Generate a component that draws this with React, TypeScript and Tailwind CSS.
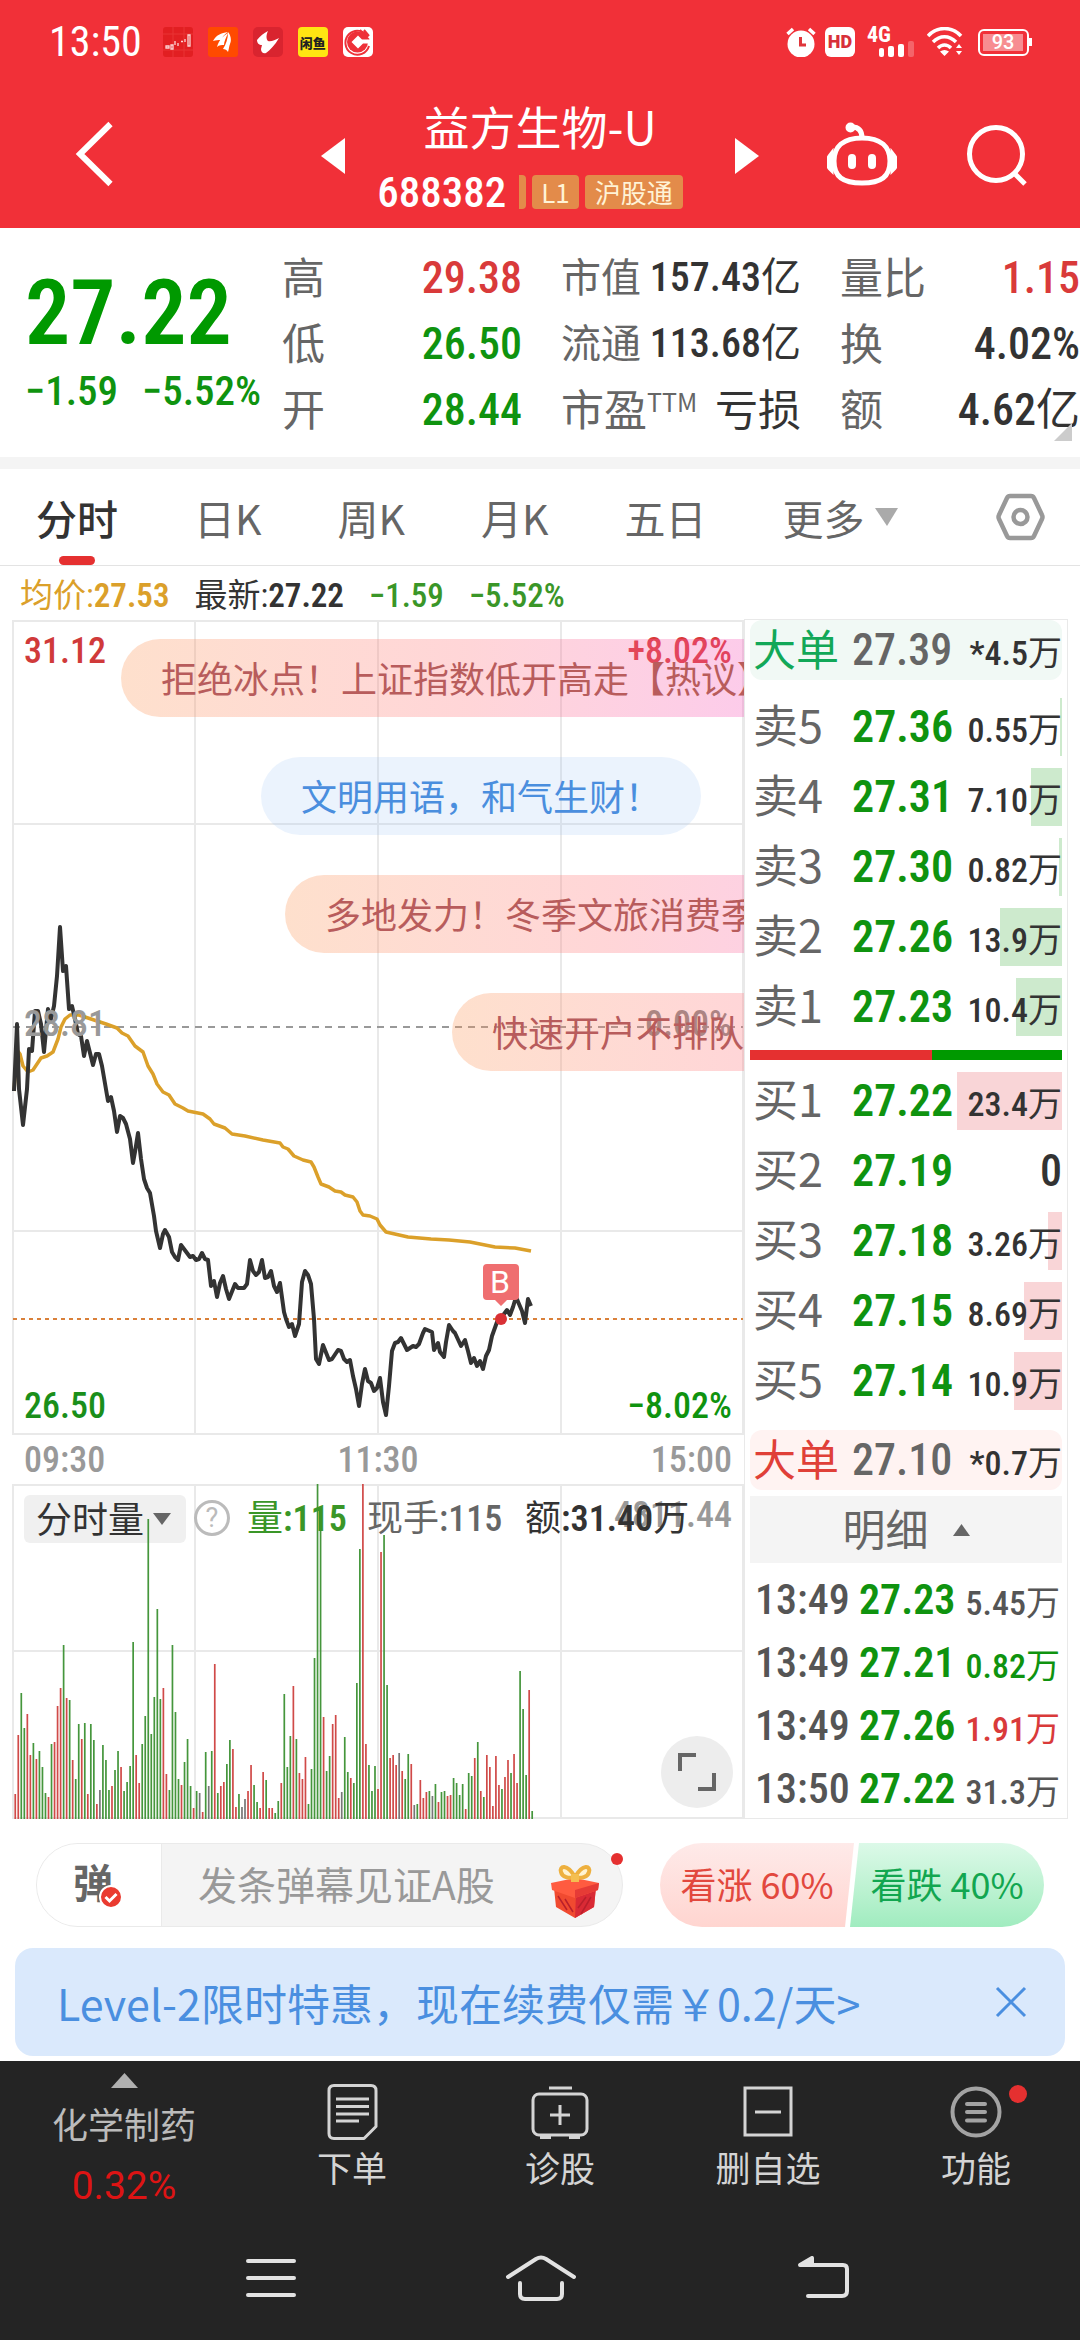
import type { ReactNode } from 'react';
import clsx from 'clsx';

const NUM = "font-['Roboto_Condensed','Liberation_Sans_Narrow','Noto_Sans_CJK_SC',sans-serif]";

const stats = [
  [
    { label: '高', value: '29.38', tone: 'text-[#d93a3a]' },
    { label: '低', value: '26.50', tone: 'text-[#0f930f]' },
    { label: '开', value: '28.44', tone: 'text-[#0f930f]' },
  ],
  [
    { label: '市值', value: '157.43', unit: '亿', tone: 'text-[#333]' },
    { label: '流通', value: '113.68', unit: '亿', tone: 'text-[#333]' },
    { label: '市盈', sup: 'TTM', value: '亏损', tone: 'text-[#333]' },
  ],
  [
    { label: '量比', value: '1.15', tone: 'text-[#d93a3a]' },
    { label: '换', value: '4.02%', tone: 'text-[#333]' },
    { label: '额', value: '4.62', unit: '亿', tone: 'text-[#333]' },
  ],
];

const tabs = ['分时', '日K', '周K', '月K', '五日'];

const asks = [
  { label: '卖5', price: '27.36', volume: '0.55', bar: 2 },
  { label: '卖4', price: '27.31', volume: '7.10', bar: 31 },
  { label: '卖3', price: '27.30', volume: '0.82', bar: 3 },
  { label: '卖2', price: '27.26', volume: '13.9', bar: 62 },
  { label: '卖1', price: '27.23', volume: '10.4', bar: 46 },
];

const bids = [
  { label: '买1', price: '27.22', volume: '23.4', bar: 105 },
  { label: '买2', price: '27.19', volume: '0', bar: 0 },
  { label: '买3', price: '27.18', volume: '3.26', bar: 14 },
  { label: '买4', price: '27.15', volume: '8.69', bar: 38 },
  { label: '买5', price: '27.14', volume: '10.9', bar: 48 },
];

const ticks = [
  { time: '13:49', price: '27.23', volume: '5.45', tone: 'text-[#555]' },
  { time: '13:49', price: '27.21', volume: '0.82', tone: 'text-[#0f930f]' },
  { time: '13:49', price: '27.26', volume: '1.91', tone: 'text-[#d93a3a]' },
  { time: '13:50', price: '27.22', volume: '31.3', tone: 'text-[#555]' },
];

const priceLine =
  '2,471 5,404 7,469 9,487 11,505 15,469 17,429 20,431 23,391 26,391 29,404 32,432 36,389 39,399 42,386 45,356 48,307 51,351 54,346 57,389 60,386 63,399 66,414 69,416 72,436 75,421 81,445 84,434 87,434 90,446 96,481 99,477 102,491 105,512 108,496 111,498 114,504 118,519 121,543 123,532 126,513 129,539 132,559 135,568 138,573 142,596 144,611 148,628 151,614 153,610 157,617 160,632 163,637 166,640 169,625 172,629 178,637 181,636 184,640 187,639 190,633 193,639 196,640 199,666 202,661 205,677 208,663 211,656 214,669 217,679 223,664 226,668 232,668 235,664 238,640 241,651 244,655 247,652 250,640 253,658 256,657 259,651 262,666 265,672 268,663 272,692 274,699 277,707 280,704 283,716 287,704 290,662 293,651 296,655 299,664 302,699 304,739 307,744 311,725 317,740 320,739 326,730 329,731 332,739 335,742 338,740 341,756 344,769 347,786 350,764 353,749 356,761 359,763 362,771 365,768 368,758 371,782 374,795 377,766 380,731 383,723 386,722 389,718 395,730 401,726 404,727 407,724 411,713 413,709 420,712 422,730 426,723 428,732 432,737 434,722 437,705 441,711 443,713 449,726 453,720 456,731 459,743 462,738 465,746 468,741 471,749 474,736 477,730 480,716 485,702 489,698 495,690 498,695 501,687 504,677 510,691 513,703 516,679 519,686';

const averageLine =
  '2,471 5,430 8,434 11,446 16,452 21,450 29,438 35,436 41,432 46,419 49,407 53,399 58,395 67,395 76,398 94,404 105,408 110,413 116,416 123,426 131,432 136,446 141,454 145,464 151,472 157,475 163,484 171,488 176,491 191,494 198,499 202,504 213,508 220,514 233,516 251,520 268,523 271,527 276,529 282,536 291,540 299,542 302,547 306,557 309,564 317,567 323,571 329,572 333,575 341,577 345,582 348,591 351,595 358,596 365,599 368,605 374,612 396,617 419,619 437,620 458,622 483,627 503,628 519,631';

// one entry per minute: r = up, g = down, n = unchanged
const volumes =
  'r25 r84 g126 g91 r105 r64 g76 r60 g68 g52 g26 r22 g75 r77 r113 r131 g174 r121 g119 r59 g40 g95 r80 g96 r25 g95 g79 r15 n29 g74 g59 g29 r33 g49 g68 r52 g28 g37 g53 g177 r64 r36 g75 g103 g300 g85 g122 g210 g120 r131 r45 g29 g174 g107 g40 r34 g57 g80 g33 r11 g28 n26 r7 g67 n33 g68 r155 g26 r33 r37 g55 g79 r70 r12 g25 n12 n20 r28 r54 g34 g17 r11 r47 g39 r11 r11 g6 g18 r36 g125 g52 g83 r133 g80 r46 r40 r62 g15 g50 g161 g335 g306 r102 g48 g63 r95 r104 r21 n27 g82 g47 r41 g36 g136 g270 r335 r75 g54 g28 g53 r30 r267 g284 g134 r61 r64 r54 n66 r48 g40 g65 r55 n14 g15 r39 r21 r27 g28 n23 g35 r17 g27 g28 r23 r24 g41 g36 g24 g35 r10 g46 g43 r61 g77 r28 g22 r64 r52 r13 r63 r34 g30 r42 r59 g46 r65 r36 g148 g110 g44 r129 g8'.split(' ');

const barColors: Record<string, string> = { r: '#d04a48', g: '#45963c', n: '#777777' };

function AppIcons() {
  return (
    <div className="flex items-center gap-[15px]">
      <svg className="size-[30px]" viewBox="0 0 30 30">
        <rect width="30" height="30" rx="3" fill="#e21f22" />
        <path d="M10 0v30M21 0v30M0 7h30M0 23h30" stroke="#e93434" strokeWidth="1" />
        <path d="M3 19h3v2H3zM8 18v4h2v-4zM12 14v4M15 16v3M18 14.500h2M22 12v3M25 8v11h2V8z" stroke="#fbd5d5" strokeWidth="1.300" fill="none" />
      </svg>
      <svg className="size-[30px]" viewBox="0 0 30 30">
        <rect width="30" height="30" rx="3" fill="#ff4a00" />
        <path d="M5 14C8 8 13 6 20 5c-4 3-6 5-7 8-3 0-5 0-8 1zM9 20c2-7 6-11 11-14-2 5-4 8-4 12-2 0-5 0-7 2zM15 22c3-5 5-10 5-17 4 5 3 10 2 12s-1 5-2 8c-1-2-3-3-5-3z" fill="#fff" />
      </svg>
      <svg className="size-[30px]" viewBox="0 0 30 30">
        <rect width="30" height="30" rx="5" fill="#d9242f" />
        <path d="M15 4c-2 4-2 8 0 10 3 1 7-1 11-3-4 7-9 12-13 15-3 1-5-1-5-4l1-4c-3 0-5-2-5-5 3-4 7-7 11-9z" fill="#fff" />
      </svg>
      <div className="flex size-[30px] items-center justify-center rounded bg-[#ffe512] text-[13px] leading-none font-black text-[#222]">闲鱼</div>
      <svg className="size-[30px]" viewBox="0 0 30 30">
        <rect width="30" height="30" rx="5" fill="#fff" />
        <path d="M25 10A12 12 0 1 0 26 19M17 3l9 10M21 3l5 6" fill="none" stroke="#ee3038" strokeWidth="2" />
        <circle cx="14.500" cy="15" r="10.500" fill="#ee3038" />
        <path d="M15 8.500l6.500 6.500-6.500 6.500L8.500 15zM19 12.500h8v4h-8z" fill="#fff" />
      </svg>
    </div>
  );
}

function StatusBar() {
  return (
    <div className="flex h-[84px] items-center justify-between pr-12 pl-[49px] text-white">
      <div className="flex items-center gap-[21px]">
        <time className="font-['Roboto_Condensed','Liberation_Sans_Narrow',sans-serif] text-[42px] leading-none">13:50</time>
        <AppIcons />
      </div>
      <div className="flex items-center">
        <svg className="h-[30px] w-[30px]" viewBox="0 0 30 30">
          <circle cx="15" cy="17" r="13.500" fill="#fff" />
          <path d="M1.500 7 7 2M28.500 7 23 2" stroke="#fff" strokeWidth="3.500" />
          <path d="M14.500 10v8H20" fill="none" stroke="#e0353b" strokeWidth="3" />
        </svg>
        <div className="ml-[9px] flex size-[30px] items-center justify-center rounded-md bg-white font-[Roboto,sans-serif] text-[18px] leading-none font-black text-[#d8303a]">HD</div>
        <div className="ml-3 h-[30px] w-[47px]">
          <div className="font-['Roboto_Condensed','Liberation_Sans_Narrow',sans-serif] text-[22px] leading-4 font-bold">4G</div>
          <svg className="-mt-[2px] ml-3 h-4 w-[35px]" viewBox="0 0 35 16">
            <rect x="0" y="7" width="5" height="9" rx="2" fill="#fff" />
            <rect x="9" y="5" width="6" height="11" rx="2" fill="#fff" />
            <rect x="19" y="3" width="6" height="13" rx="2" fill="#fff" />
            <rect x="29" y="0" width="6" height="16" rx="2" fill="#fff" opacity="0.25" />
          </svg>
        </div>
        <svg className="ml-[13px] h-[30px] w-9" viewBox="0 0 36 30">
          <path d="M1 9C10-1 25-1 34 9M6 15c7-7 16-7 23 0M11 21c4-4 9-4 13 0" fill="none" stroke="#fff" strokeWidth="3.500" />
          <path d="M13 24.500c3-2 6-2 9 0L17.500 29zM29 21l3-4 3 4zM29 24l3 4 3-4z" fill="#fff" />
        </svg>
        <div className="ml-[15px] flex items-center">
          <div className="flex h-[27px] w-[51px] items-center rounded-md border-2 border-white p-[3px]">
            <div className="h-full w-10 bg-white/45 text-center font-[Roboto,sans-serif] text-[20px] leading-[17px] font-medium">93</div>
          </div>
          <div className="h-2 w-[3px] bg-white" />
        </div>
      </div>
    </div>
  );
}

function Header() {
  return (
    <header className="bg-[#f13038] text-white">
      <StatusBar />
      <div className="grid h-36 grid-cols-[1fr_auto_1fr] items-start">
        <button aria-label="返回" className="mt-[37px] ml-[75px] justify-self-start">
          <svg className="h-[66px] w-10" viewBox="0 0 40 66">
            <path d="M35.500 3 5 33l30.500 30" fill="none" stroke="#fff" strokeWidth="6" />
          </svg>
        </button>
        <div className="flex w-[438px] justify-between">
          <button aria-label="上一只" className="mt-[54px] self-start">
            <svg className="h-9 w-6" viewBox="0 0 24 36"><path d="M24 0v36L0 18z" fill="#fff" /></svg>
          </button>
          <div className="flex flex-col items-center">
            <h1 className="mt-2 mb-1 text-[46px] leading-[66px]">益方生物-U</h1>
            <div className="flex items-center gap-[6px] pr-5">
              <span className={clsx(NUM, 'mr-[7px] text-[43px] leading-[60px] font-medium')}>688382</span>
              <span className="h-[34px] w-[7px] rounded-r bg-[#e38b4a]" />
              <span className="rounded bg-[#e38b4a] px-[9px] text-[26px] leading-[34px] text-[#fff3d6]">L1</span>
              <span className="rounded bg-[#e38b4a] px-[10px] text-[26px] leading-[34px] text-[#fff3d6]">沪股通</span>
            </div>
          </div>
          <button aria-label="下一只" className="mt-[54px] self-start">
            <svg className="h-9 w-6" viewBox="0 0 24 36"><path d="M0 0v36l24-18z" fill="#fff" /></svg>
          </button>
        </div>
        <div className="mt-[38px] mr-[52px] flex items-center gap-[69px] justify-self-end">
          <button aria-label="智能助手">
            <svg className="h-[66px] w-[70px]" viewBox="0 0 70 66" fill="none" stroke="#fff" strokeWidth="5">
              <path d="M35 16c19 0 28 9 28 23 0 16-9 22-28 22S7 55 7 39c0-14 9-23 28-23z" />
              <path d="M35 16C35 8 31 5 25 5" />
              <circle cx="23.500" cy="5.500" r="2.500" />
              <path d="M4 33c-4 5-4 10 0 14zM66 33c4 5 4 10 0 14z" fill="#fff" />
              <path d="M25 36v7M45 36v7" strokeWidth="8" strokeLinecap="round" />
            </svg>
          </button>
          <button aria-label="搜索">
            <svg className="h-[66px] w-[62px]" viewBox="0 0 62 66" fill="none" stroke="#fff" strokeWidth="5">
              <circle cx="30" cy="32" r="26.500" />
              <path d="M48 51l11 11" />
            </svg>
          </button>
        </div>
      </div>
    </header>
  );
}

function Quote() {
  return (
    <section className="relative flex border-b-12 border-[#f4f4f4] pt-[17px] pb-[14px]">
      <div className="w-[282px] pl-[25px]">
        <div className={clsx(NUM, 'mt-[22px] text-[90px] leading-[94px] font-semibold text-[#009900]')}>27.22</div>
        <div className={clsx(NUM, 'mt-[6px] flex gap-6 text-[41px] leading-12 font-medium whitespace-nowrap text-[#0f930f]')}>
          <span>−1.59</span>
          <span>−5.52%</span>
        </div>
      </div>
      <div className="grid flex-1 grid-cols-3 gap-[39px]">
        {stats.map((column, i) => (
          <dl key={i}>
            {column.map((item) => (
              <div key={item.label} className="flex h-[66px] items-center justify-between whitespace-nowrap">
                <dt className={clsx('pb-[6px] leading-none text-[#666]', i === 1 && !item.sup ? 'text-[40px]' : 'text-[43px]')}>
                  {item.label}
                  {item.sup && <sup className="-top-[14px] text-[25px] leading-none">{item.sup}</sup>}
                </dt>
                <dd className={clsx(item.sup ? 'pb-[6px] text-[43px]' : clsx(NUM, 'font-medium', i === 1 ? 'text-[40px]' : 'text-[44px]'), 'leading-none', item.tone)}>
                  {item.value}
                  {item.unit && <span className="font-normal">{item.unit}</span>}
                </dd>
              </div>
            ))}
          </dl>
        ))}
      </div>
      <svg className="absolute right-2 bottom-4 size-[18px]" viewBox="0 0 18 18"><path d="M18 0v18H0z" fill="#ccc" /></svg>
    </section>
  );
}

function ChartTabs() {
  return (
    <nav className="flex h-[97px] items-center gap-[76px] border-b border-[#e3e3e3] pr-[35px] pl-9 text-[41px] text-[#666]">
      {tabs.map((tab, i) => (
        <button key={tab} className={clsx('relative h-full leading-none', i === 0 && 'font-medium text-[#333]')}>
          {tab}
          {i === 0 && <span className="absolute bottom-0 left-1/2 h-[9px] w-9 -translate-x-1/2 rounded-full bg-[#e53030]" />}
        </button>
      ))}
      <button className="flex h-full items-center gap-[10px] leading-none">
        更多
        <svg className="h-[18px] w-[23px]" viewBox="0 0 23 18"><path d="M0 0h23L12 18z" fill="#aaa" /></svg>
      </button>
      <button aria-label="设置" className="ml-auto">
        <svg className="h-12 w-[49px]" viewBox="0 0 49 48" fill="none" stroke="#999" strokeWidth="4.500" strokeLinejoin="round">
          <path d="M14 3h21q2 0 3 2l8 17q1 2 0 4l-8 17q-1 2-3 2H14q-2 0-3-2L3 26q-1-2 0-4l8-17q1-2 3-2z" />
          <circle cx="24.500" cy="24" r="7" />
        </svg>
      </button>
    </nav>
  );
}

function Bubble({ className, children }: { className: string; children: ReactNode }) {
  return <div className={clsx('absolute h-[78px] rounded-full px-10 text-[36px] leading-[76px] whitespace-nowrap', className)}>{children}</div>;
}

function PriceChart() {
  return (
    <div className={clsx(NUM, 'relative h-[815px] overflow-hidden text-[36px] leading-none font-medium')}>
      <svg className="size-full" viewBox="0 0 732 815" preserveAspectRatio="none" fill="none">
        <path d="M1 1h730v813H1zM183 1v813M366 1v813M549 1v813M1 204h730M1 611h730" stroke="#e9e9e9" strokeWidth="2" />
        <path d="M1 407h730" stroke="#999" strokeWidth="2" strokeDasharray="7 6" />
        <path d="M1 699h730" stroke="#d9803a" strokeWidth="2" strokeDasharray="4 4" />
        <polyline points={averageLine} stroke="#dba02a" strokeWidth="3.500" strokeLinejoin="round" />
        <polyline points={priceLine} stroke="#333" strokeWidth="4" strokeLinejoin="round" />
        <path d="M475 644h28q4 0 4 4v28q0 4-4 4h-8l-6 6-6-6h-8q-4 0-4-4v-28q0-4 4-4z" fill="#ef6e70" />
        <circle cx="489" cy="699" r="6" fill="#d93035" />
      </svg>
      <span className="absolute top-[13px] left-3 text-[#d03a3a]">31.12</span>
      <span className="absolute top-[13px] right-3 text-[#d93a3a]">+8.02%</span>
      <span className="absolute top-[386px] left-3 text-[#999]">28.81</span>
      <span className="absolute top-[386px] right-3 text-[#888]">0.00%</span>
      <span className="absolute bottom-[11px] left-3 text-[#1a8f1a]">26.50</span>
      <span className="absolute right-3 bottom-[11px] text-[#0f930f]">−8.02%</span>
      <span className="absolute top-[646px] left-[478px] font-[Roboto,sans-serif] text-[32px] font-normal text-white">B</span>
      <div className="font-['Noto_Sans_CJK_SC',sans-serif] font-normal text-[#b85c5c]">
        <Bubble className="top-[19px] left-[109px] bg-linear-to-r from-[#fc98584d] via-[#ff767d4d] to-[#f548c64d]">拒绝冰点！上证指数低开高走【热议】</Bubble>
        <Bubble className="top-[137px] left-[249px] bg-[#9bc3f533] text-[#4a8ede]">文明用语，和气生财！</Bubble>
        <Bubble className="top-[255px] left-[273px] bg-linear-to-r from-[#fc98584d] via-[#ff767d4d] to-[#f548c64d]">多地发力！冬季文旅消费季火热开启</Bubble>
        <Bubble className="top-[373px] left-[440px] bg-linear-to-r from-[#fc98584d] via-[#ff767d4d] to-[#f548c64d]">快速开户不排队，手机轻松办理</Bubble>
      </div>
    </div>
  );
}

function VolumeChart() {
  return (
    <div className={clsx(NUM, 'relative h-[335px] text-[36px] leading-none')}>
      <svg className="size-full" viewBox="0 0 732 335" preserveAspectRatio="none">
        <path d="M1 1h730v333H1zM183 1v333M366 1v333M549 1v333M1 167h730" fill="none" stroke="#e9e9e9" strokeWidth="2" />
      </svg>
      <select aria-label="指标" className="absolute top-[11px] left-3 h-12 w-[162px] appearance-none rounded-md bg-[#f0f0f0] pb-[3px] pl-3 font-['Noto_Sans_CJK_SC',sans-serif] text-[36px] leading-[45px] text-[#333]">
        <option>分时量</option>
      </select>
      <svg className="absolute top-[29px] left-[141px] h-3 w-[18px]" viewBox="0 0 18 12"><path d="M0 0h18l-9 12z" fill="#666" /></svg>
      <svg className="absolute inset-0 size-full" viewBox="0 0 732 335" preserveAspectRatio="none">
        {volumes.map((v, i) => {
          const height = Number(v.slice(1));
          return <rect key={i} x={2.4 + i * 3.023} y={335 - height} width="1.700" height={height} fill={barColors[v[0]]} />;
        })}
      </svg>
      <button aria-label="指标说明" className="absolute top-4 left-[182px] flex size-9 items-center justify-center rounded-full border-3 border-[#bbb] font-[Roboto,sans-serif] text-[27px] leading-none text-[#bbb]">?</button>
      <span className="absolute top-[13px] right-3 font-medium text-[#999]">4811.44</span>
      <div className="absolute top-[17px] left-[235px] flex whitespace-nowrap">
        <span className="w-[120px] text-[#3a9628]">量<b className="font-semibold">:115</b></span>
        <span className="w-[158px] text-[#666]">现手<b className="font-medium">:115</b></span>
        <span className="text-[#333]">额<b className="font-semibold">:31.40</b>万</span>
      </div>
      <button aria-label="全屏" className="absolute right-[11px] bottom-[11px] flex size-18 items-center justify-center rounded-full bg-[#ededed]">
        <svg className="size-[38px]" viewBox="0 0 38 38"><path d="M2 18V2h16M36 20v16H20" fill="none" stroke="#666" strokeWidth="4" /></svg>
      </button>
    </div>
  );
}

function BigOrder({ price, volume, className, labelClass }: { price: string; volume: string; className: string; labelClass: string }) {
  return (
    <div className={clsx('flex h-[60px] items-center rounded-xl pl-[3px] leading-none', className)}>
      <span className={clsx('w-[99px] pb-[6px] text-[43px] whitespace-nowrap', labelClass)}>大单</span>
      <span className={clsx(NUM, 'text-[44px] font-medium text-[#666]')}>{price}</span>
      <span className={clsx(NUM, 'ml-auto pt-[6px] text-[34px] font-medium text-[#333]')}>
        *{volume}
        <span className="font-normal">万</span>
      </span>
    </div>
  );
}

function Levels({ rows, barClass }: { rows: typeof asks; barClass: string }) {
  return (
    <table className="w-full table-fixed leading-none">
      <tbody>
        {rows.map((row) => (
          <tr key={row.label} className="h-[70px]">
            <th scope="row" className="w-[102px] p-0 pb-2 pl-[3px] text-left text-[45px] font-normal whitespace-nowrap text-[#666]">{row.label}</th>
            <td className={clsx(NUM, 'w-[102px] p-0 text-[44px] font-semibold text-[#0f930f]')}>{row.price}</td>
            <td className={clsx(NUM, 'relative p-0 text-right font-medium whitespace-nowrap text-[#333]', row.volume === '0' ? 'text-[44px]' : 'pt-[6px] text-[34px]')}>
              <span className={clsx('absolute top-[6px] right-0 h-[58px]', barClass)} style={{ width: row.bar }} />
              <span className="relative">
                {row.volume}
                {row.volume !== '0' && <span className="font-normal">万</span>}
              </span>
            </td>
          </tr>
        ))}
      </tbody>
    </table>
  );
}

function OrderBook() {
  return (
    <aside className="-mt-px w-[324px] border border-[#e9e9e9] px-[5px]">
      <BigOrder price="27.39" volume="4.5" className="mb-3 bg-[#f1f9f5]" labelClass="text-[#12a858]" />
      <Levels rows={asks} barClass="bg-[#cdeacd]" />
      <div className="mt-2 mb-[6px] flex h-[10px]">
        <div className="w-7/12 bg-[#e53030]" />
        <div className="flex-1 bg-[#009900]" />
      </div>
      <Levels rows={bids} barClass="bg-[#f9d5d7]" />
      <BigOrder price="27.10" volume="0.7" className="mt-[14px] bg-[#fff3f2]" labelClass="text-[#e04038]" />
      <button className="mt-[6px] flex h-[67px] w-full items-center justify-center gap-6 bg-[#f4f4f4] text-[43px] leading-none text-[#666]">
        <span className="pb-1">明细</span>
        <svg className="h-3 w-[17px]" viewBox="0 0 17 12"><path d="M0 12h17L8.500 0z" fill="#666" /></svg>
      </button>
      <table className={clsx(NUM, 'mt-[3px] w-full table-fixed leading-none font-medium whitespace-nowrap')}>
        <tbody>
          {ticks.map((tick, i) => (
            <tr key={i} className="h-[63px]">
              <td className="w-[109px] p-0 pt-[5px] pl-[5px] text-[42px] text-[#555]">{tick.time}</td>
              <td className="w-[95px] p-0 pt-[5px] text-[42px] font-semibold text-[#0f930f]">{tick.price}</td>
              <td className={clsx('p-0 pt-[10px] pr-[2px] text-right text-[34px]', tick.tone)}>
                {tick.volume}
                <span className="font-normal">万</span>
              </td>
            </tr>
          ))}
        </tbody>
      </table>
    </aside>
  );
}

function Gift() {
  return (
    <svg className="h-[54px] w-[50px]" viewBox="0 0 50 54">
      <path d="M4 24l22 8 20-8-2 19-19 11L6 43z" fill="#f04a30" />
      <path d="M26 30l20-8-2 21-19 11z" fill="#d92a35" />
      <path d="M1 19l24-5 24 5-1 7-23 8-23-8z" fill="#ff5b40" />
      <path d="M25 26l24-7-1 7-23 8z" fill="#e63b36" />
      <path d="M8 32l9 14M15 35l8 13M31 50l10-17M28 44l8-11" stroke="#b91f2b" strokeWidth="1.500" />
      <path d="M25 13C17-1 9 2 11 8c1 5 8 7 14 5 6 2 13 0 14-5 2-6-6-9-14 5z" fill="#fff3d0" stroke="#eeb03e" strokeWidth="4" />
      <path d="M21 10h8v8h-8z" fill="#f4be50" />
    </svg>
  );
}

function DanmakuBar() {
  return (
    <div className="mt-6 flex h-[84px] gap-[37px] pr-9 pl-9">
      <div className="relative flex min-w-0 flex-1 rounded-full border border-[#eaeaea] bg-[#f4f4f4]">
        <button aria-label="弹幕开关" className="relative w-[125px] shrink-0 rounded-l-full border-r border-[#eaeaea] bg-white text-[40px] leading-none font-bold text-[#666]">
          <span className="-mt-2 block pr-3">弹</span>
          <svg className="absolute top-[41px] left-[62px] size-6" viewBox="0 0 24 24">
            <circle cx="12" cy="12" r="11" fill="#ea3b30" stroke="#fff" strokeWidth="2" />
            <path d="M6.500 12l4 4 7-7" fill="none" stroke="#fff" strokeWidth="3" />
          </svg>
        </button>
        <input aria-label="弹幕" placeholder="发条弹幕见证A股" className="min-w-0 flex-1 bg-transparent pb-1 pl-9 text-[39px] text-[#333] outline-none placeholder:text-[#999]" />
        <button aria-label="礼物" className="mt-3 mr-[22px] shrink-0"><Gift /></button>
        <span className="absolute top-[9px] -right-px size-3 rounded-full bg-[#e53030]" />
      </div>
      <div className="flex w-[384px] shrink-0 text-[36px] leading-none whitespace-nowrap">
        <button className="flex-1 rounded-l-full bg-linear-to-b from-[#feeae9] to-[#ffd5d0] pb-1 text-[#e2483e] [clip-path:polygon(0_0,100%_0,calc(100%-9px)_100%,0_100%)]">看涨 60%</button>
        <button className="-ml-1 flex-1 rounded-r-full bg-linear-to-b from-[#dcf9e8] to-[#a0ecbf] pb-1 text-[#12a650] [clip-path:polygon(9px_0,100%_0,100%_100%,0_100%)]">看跌 40%</button>
      </div>
    </div>
  );
}

function Promo() {
  return (
    <div className="mx-[15px] mt-[21px] mb-[5px] flex h-27 items-center justify-between rounded-[18px] bg-[#dae9fc] pr-[38px] pl-[42px] text-[#4a8fe0]">
      <a href="#level2" className="text-[43px] leading-none">Level-2限时特惠，现在续费仅需￥0.2/天&gt;</a>
      <button aria-label="关闭">
        <svg className="size-8" viewBox="0 0 32 32"><path d="M2 2l28 28M30 2 2 30" stroke="#4a8fe0" strokeWidth="3" /></svg>
      </button>
    </div>
  );
}

function Action({ label, children }: { label: string; children: ReactNode }) {
  return (
    <button className="flex flex-col items-center pt-[22px] text-[35px] leading-[52px] text-[#d4d4d4]">
      <svg className="h-[58px] w-[58px]" viewBox="0 0 58 58" fill="none" stroke="#d4d4d4" strokeWidth="3">{children}</svg>
      {label}
    </button>
  );
}

function BottomBar() {
  return (
    <footer className="bg-[#242424]">
      <div className="grid h-[154px] grid-cols-[248fr_208fr_208fr_208fr_208fr]">
        <button className="flex flex-col items-center pt-3 text-[36px] text-[#bbb]">
          <svg className="h-[15px] w-[27px]" viewBox="0 0 27 15"><path d="M0 15h27L13.500 0z" fill="#b0b0b0" /></svg>
          <span className="mt-[9px] leading-[52px]">化学制药</span>
          <span className="mt-[10px] font-[Roboto,sans-serif] text-[39px] leading-[54px] text-[#dd1414]">0.32%</span>
        </button>
        <Action label="下单">
          <path d="M11 2.500h37q5 0 5 5v36L41 55.500H11q-5 0-5-5v-43q0-5 5-5z" strokeLinejoin="round" />
          <path d="M13 16h33M13 23.500h33M13 31h33M13 38h23" />
        </Action>
        <Action label="诊股">
          <path d="M18 5h23" />
          <rect x="2" y="11" width="54" height="41" rx="6" />
          <path d="M29 22v20M19 32h20" />
          <path d="M9 54.500h11M38 54.500h11" />
        </Action>
        <Action label="删自选">
          <rect x="6" y="5" width="46" height="47" />
          <path d="M16 29h26" />
        </Action>
        <div className="relative flex justify-center">
          <Action label="功能">
            <circle cx="29" cy="29" r="23.500" stroke="#a3a3a3" strokeWidth="4" />
            <path d="M20 21h18M20 29h18M20 37.500h18" stroke="#a3a3a3" strokeWidth="4" strokeLinecap="round" />
          </Action>
          <span className="absolute top-6 right-[53px] size-[18px] rounded-full bg-[#e53030]" />
        </div>
      </div>
      <div className="flex h-[125px] items-center gap-[190px] pl-[231px]">
        <button aria-label="最近任务" className="w-20">
          <svg className="mx-auto h-11 w-[54px]" viewBox="0 0 54 44" stroke="#e2e2e2" strokeWidth="4" strokeLinecap="round"><path d="M4 5h46M4 22h46M4 39h46" /></svg>
        </button>
        <button aria-label="主屏幕" className="w-20">
          <svg className="mx-auto h-12 w-[74px]" viewBox="0 0 74 48" fill="none" stroke="#e2e2e2" strokeWidth="4" strokeLinecap="round">
            <path d="M4 23 32 5q5-3 10 0l28 18M16 29v11q0 5 5 5h32q5 0 5-5V29" />
          </svg>
        </button>
        <button aria-label="返回上一页" className="ml-3 w-20">
          <svg className="mx-auto h-11 w-[56px]" viewBox="0 0 56 44" fill="none" stroke="#e2e2e2" strokeWidth="4" strokeLinecap="round" strokeLinejoin="round">
            <path d="M6 9h42q4 0 4 4v22q0 5-5 5H13" />
            <path d="M5 9l12-7v7z" fill="#e2e2e2" />
          </svg>
        </button>
      </div>
    </footer>
  );
}

export default function App() {
  return (
    <div className="min-h-screen bg-white font-['Noto_Sans_CJK_SC',sans-serif]">
      <Header />
      <main>
        <Quote />
        <ChartTabs />
        <div className={clsx(NUM, 'flex h-[54px] items-center gap-[25px] pt-1 pl-5 text-[33px] leading-none whitespace-nowrap')}>
          <span className="text-[#dba02a]">均价:<b className="font-semibold">27.53</b></span>
          <span className="text-[#333]">最新:<b className="font-semibold">27.22</b></span>
          <span className="font-medium text-[#3a9628]">−1.59</span>
          <span className="font-medium text-[#3a9628]">−5.52%</span>
        </div>
        <div className="flex pr-3 pl-3">
          <div className="min-w-0 flex-1">
            <PriceChart />
            <div className={clsx(NUM, 'flex h-[49px] items-center justify-between px-3 text-[36px] leading-none font-medium text-[#999]')}>
              <span>09:30</span>
              <span>11:30</span>
              <span>15:00</span>
            </div>
            <VolumeChart />
          </div>
          <OrderBook />
        </div>
        <DanmakuBar />
        <Promo />
      </main>
      <BottomBar />
    </div>
  );
}
